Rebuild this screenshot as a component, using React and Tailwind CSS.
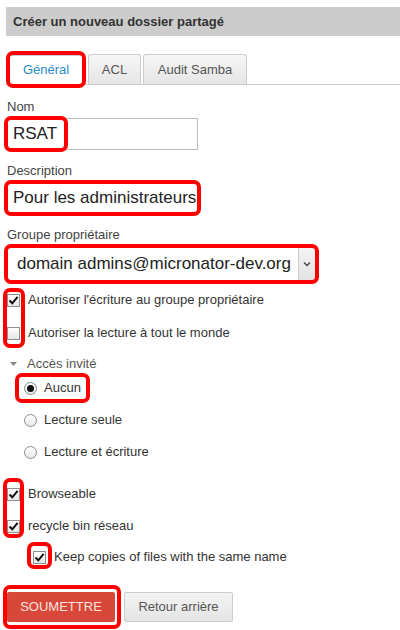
import React from "react";

function Check({ checked }) {
  return (
    <span className="w-[13px] h-[13px] shrink-0 border border-[#8e8e8e] bg-gradient-to-b from-[#ffffff] to-[#e6e6e6] flex items-center justify-center">
      {checked && (
        <svg width="11" height="11" viewBox="0 0 11 11">
          <path d="M1.5 5.5 L4.3 8.3 L9.6 1.8" fill="none" stroke="#111" strokeWidth="2" />
        </svg>
      )}
    </span>
  );
}

function Radio({ checked }) {
  return (
    <span className="w-[13px] h-[13px] shrink-0 rounded-full border border-[#8a8a8a] bg-gradient-to-b from-[#ffffff] to-[#e8e8e8] flex items-center justify-center">
      {checked && <span className="w-[7px] h-[7px] rounded-full bg-[#111]" />}
    </span>
  );
}

function RedBox({ x, y, w, h }) {
  return (
    <div
      className="absolute border-[4px] border-[#ff0000] rounded-[7px] pointer-events-none"
      style={{ left: x, top: y, width: w, height: h }}
    />
  );
}

export default function App() {
  return (
    <div className="relative w-[400px] h-[630px] bg-white overflow-hidden font-['Liberation_Sans',Arial,sans-serif] text-[13px] text-[#333]">
      <div className="ml-[6px] mt-[7px] h-[29px] bg-[#cccccc] pl-[7px] flex items-center font-bold text-[#333]">
        Créer un nouveau dossier partagé
      </div>

      <div className="mt-[18px] ml-[6px] flex items-end border-b border-[#cccccc] h-[31px]">
        <div className="ml-[2px] w-[76px] h-[30px] mb-[-1px] border border-[#cccccc] border-b-white bg-white rounded-t-[3px] flex items-center justify-center text-[#2a8bc8]">
          Général
        </div>
        <div className="ml-[4px] w-[53px] h-[30px] border border-[#cccccc] border-b-0 rounded-t-[3px] bg-gradient-to-b from-[#f7f7f7] to-[#e5e5e5] flex items-center justify-center text-[#555]">
          ACL
        </div>
        <div className="ml-[2px] w-[104px] h-[30px] border border-[#cccccc] border-b-0 rounded-t-[3px] bg-gradient-to-b from-[#f7f7f7] to-[#e5e5e5] flex items-center justify-center text-[#555]">
          Audit Samba
        </div>
      </div>

      <div className="mt-[14px] ml-[7px] leading-[16px] text-[#444]">Nom</div>
      <div className="mt-[3px] ml-[7px] w-[191px] h-[32px] border border-[#bbbbbb] pl-[5px] flex items-center text-[17px] text-[#222]">
        RSAT
      </div>

      <div className="mt-[13px] ml-[7px] leading-[16px] text-[#444]">Description</div>
      <div className="mt-[3px] ml-[7px] w-[191px] h-[32px] border border-[#bbbbbb] pl-[5px] flex items-center text-[17px] text-[#222] overflow-hidden whitespace-nowrap">
        Pour les administrateurs
      </div>

      <div className="mt-[13px] ml-[7px] leading-[16px] text-[#444]">Groupe propriétaire</div>
      <div className="mt-[3px] ml-[7px] w-[309px] h-[36px] border border-[#bbbbbb] flex items-stretch text-[17px] text-[#222]">
        <div className="flex-1 pl-[9px] flex items-center whitespace-nowrap overflow-hidden">
          domain admins@micronator-dev.org
        </div>
        <div className="w-[17px] border-l border-[#cccccc] bg-gradient-to-b from-[#f4f4f4] to-[#e2e2e2] flex items-center justify-center">
          <svg width="8" height="6" viewBox="0 0 8 6">
            <path d="M1 1.5 L4 4.5 L7 1.5" fill="none" stroke="#444" strokeWidth="1.4" />
          </svg>
        </div>
      </div>

      <div className="mt-[10px] ml-[7px] h-[16px] flex items-center">
        <Check checked />
        <span className="ml-[8px]">Autoriser l'écriture au groupe propriétaire</span>
      </div>
      <div className="mt-[17px] ml-[7px] h-[16px] flex items-center">
        <Check />
        <span className="ml-[8px]">Autoriser la lecture à tout le monde</span>
      </div>

      <div className="mt-[15px] ml-[10px] h-[16px] flex items-center text-[#555]">
        <svg width="7" height="5" viewBox="0 0 7 5">
          <path d="M0 0 L7 0 L3.5 4 Z" fill="#888" />
        </svg>
        <span className="ml-[10px]">Accès invité</span>
      </div>

      <div className="mt-[8px] ml-[24px] h-[16px] flex items-center">
        <Radio checked />
        <span className="ml-[7px]">Aucun</span>
      </div>
      <div className="mt-[16px] ml-[24px] h-[16px] flex items-center">
        <Radio />
        <span className="ml-[7px]">Lecture seule</span>
      </div>
      <div className="mt-[16px] ml-[24px] h-[16px] flex items-center">
        <Radio />
        <span className="ml-[7px]">Lecture et écriture</span>
      </div>

      <div className="mt-[26px] ml-[7px] h-[16px] flex items-center">
        <Check checked />
        <span className="ml-[8px]">Browseable</span>
      </div>
      <div className="mt-[16px] ml-[7px] h-[16px] flex items-center">
        <Check checked />
        <span className="ml-[8px]">recycle bin réseau</span>
      </div>
      <div className="mt-[15px] ml-[33px] h-[16px] flex items-center">
        <Check checked />
        <span className="ml-[8px]">Keep copies of files with the same name</span>
      </div>

      <div className="mt-[27px] ml-[7px] flex items-center">
        <div className="w-[108px] h-[30px] rounded-[2px] bg-[#d8483a] flex items-center justify-center text-[#fbe3df]">
          SOUMETTRE
        </div>
        <div className="ml-[9px] w-[109px] h-[30px] rounded-[2px] border border-[#cccccc] bg-gradient-to-b from-[#f4f4f4] to-[#e4e4e4] flex items-center justify-center text-[#555]">
          Retour arrière
        </div>
      </div>

      <RedBox x={6} y={51} w={80} h={37} />
      <RedBox x={4} y={116} w={64} h={36} />
      <RedBox x={4} y={180} w={197} h={36} />
      <RedBox x={4} y={244} w={315} h={40} />
      <RedBox x={3} y={288} w={22} h={60} />
      <RedBox x={15} y={373} w={75} h={30} />
      <RedBox x={3} y={478} w={21} h={60} />
      <RedBox x={27} y={542} w={25} h={27} />
      <RedBox x={3} y={585} w={118} h={44} />
    </div>
  );
}
